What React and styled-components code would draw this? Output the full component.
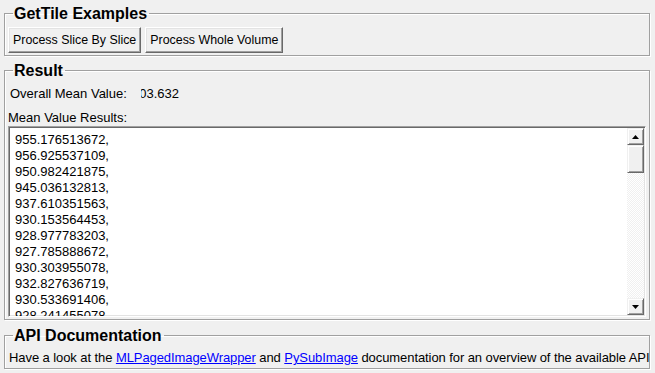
import React from 'react';
import styled, { createGlobalStyle } from 'styled-components';

const GlobalStyle = createGlobalStyle`
  html, body {
    margin: 0;
    padding: 0;
    background: #f0f0f0;
  }
  body {
    font-family: 'Liberation Sans', Arial, sans-serif;
    font-size: 13px;
    color: #000;
  }
`;

const meanValues = [
  '955.176513672,',
  '956.925537109,',
  '950.982421875,',
  '945.036132813,',
  '937.610351563,',
  '930.153564453,',
  '928.977783203,',
  '927.785888672,',
  '930.303955078,',
  '932.827636719,',
  '930.533691406,',
  '928.241455078,',
  '926.113769531,',
];

const App = () => {
  return (
    <Page>
      <GlobalStyle />
      <Group>
        <Legend>GetTile Examples</Legend>
        <ButtonRow>
          <Button>Process Slice By Slice</Button>
          <Button>Process Whole Volume</Button>
        </ButtonRow>
      </Group>

      <Group $gap={5}>
        <Legend>Result</Legend>
        <ValueRow>
          <Label>Overall Mean Value:</Label>
          <ClippedValue>
            <span>903.632</span>
          </ClippedValue>
        </ValueRow>
        <ListLabel>Mean Value Results:</ListLabel>
        <ListBox>
          <ListText>
            {meanValues.map((v) => (
              <div key={v}>{v}</div>
            ))}
          </ListText>
          <ScrollBar>
            <ScrollButton>
              <svg width='7' height='4' viewBox='0 0 7 4'>
                <polygon points='3.5,0 7,4 0,4' fill='#000' />
              </svg>
            </ScrollButton>
            <Thumb />
            <Track />
            <ScrollButton>
              <svg width='7' height='4' viewBox='0 0 7 4'>
                <polygon points='0,0 7,0 3.5,4' fill='#000' />
              </svg>
            </ScrollButton>
          </ScrollBar>
        </ListBox>
      </Group>

      <Group $gap={6}>
        <Legend>API Documentation</Legend>
        <DocText>
          Have a look at the <Link href='#'>MLPagedImageWrapper</Link> and{' '}
          <Link href='#'>PySubImage</Link> documentation for an overview of the available API
        </DocText>
      </Group>
    </Page>
  );
};

const Page = styled.div`
  width: 655px;
  height: 373px;
  box-sizing: border-box;
  padding: 4px 5px 0 4px;
  display: flex;
  flex-direction: column;
  overflow: hidden;
`;

const Group = styled.fieldset`
  margin: ${(p) => p.$gap || 0}px 0 0 0;
  padding: 0 3px 2px 3px;
  border: 1px solid #a0a0a0;
  box-shadow: 1px 1px 0 #fff, inset 1px 1px 0 #fff;
  min-width: 0;
  display: flex;
  flex-direction: column;
`;

const Legend = styled.legend`
  margin-left: 5px;
  padding: 0 2px 0 1px;
  font-weight: bold;
  font-size: 16px;
  line-height: 19px;
`;

const ButtonRow = styled.div`
  display: flex;
  gap: 4px;
  margin-top: 4px;
`;

const Button = styled.button`
  font-family: 'Liberation Sans', Arial, sans-serif;
  font-size: 12.4px;
  height: 26px;
  padding: 0 4px;
  background: #f0f0f0;
  color: #000;
  border: 1px solid;
  border-color: #fff #696969 #696969 #fff;
  box-shadow: inset -1px -1px 0 #a0a0a0, inset 1px 1px 0 #e3e3e3;
  cursor: default;
`;

const ValueRow = styled.div`
  display: flex;
  align-items: center;
  margin-top: 6px;
  padding-left: 2px;
  line-height: 16px;
`;

const Label = styled.span`
  width: 131px;
`;

const ClippedValue = styled.span`
  width: 60px;
  overflow: hidden;
  white-space: nowrap;
  span {
    display: inline-block;
    margin-left: -9px;
  }
`;

const ListLabel = styled.div`
  margin-top: 8px;
  line-height: 16px;
`;

const ListBox = styled.div`
  height: 191px;
  box-sizing: border-box;
  display: flex;
  background: #fff;
  border: 1px solid;
  border-color: #a0a0a0 #fff #fff #a0a0a0;
  box-shadow: inset 1px 1px 0 #696969, inset -1px -1px 0 #e3e3e3;
  overflow: hidden;
`;

const ListText = styled.div`
  flex: 1;
  padding: 5px 0 0 6px;
  line-height: 16px;
  overflow: hidden;
`;

const ScrollBar = styled.div`
  width: 17px;
  margin: 1px 1px 1px 0;
  display: flex;
  flex-direction: column;
`;

const ScrollButton = styled.div`
  height: 17px;
  box-sizing: border-box;
  display: flex;
  align-items: center;
  justify-content: center;
  background: #f0f0f0;
  border: 1px solid;
  border-color: #f0f0f0 #696969 #696969 #f0f0f0;
  box-shadow: inset 1px 1px 0 #fff, inset -1px -1px 0 #a0a0a0;
`;

const Thumb = styled(ScrollButton)`
  height: 28px;
`;

const Track = styled.div`
  flex: 1;
  background-color: #fff;
  background-image: repeating-conic-gradient(#f0f0f0 0 25%, #fff 0 50%);
  background-size: 2px 2px;
`;

const DocText = styled.div`
  margin-top: 5px;
  line-height: 16px;
  white-space: nowrap;
  padding-left: 1px;
  letter-spacing: -0.08px;
`;

const Link = styled.a`
  color: #0000ff;
  text-decoration: underline;
`;

export default App;
